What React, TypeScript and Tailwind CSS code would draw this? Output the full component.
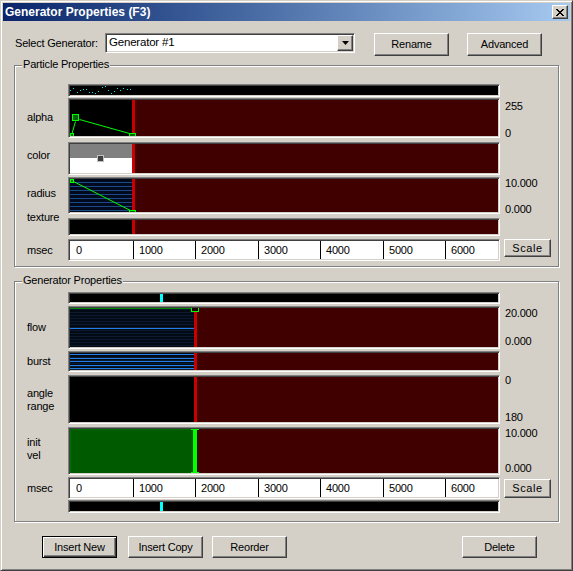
import React from "react";

const graphBox =
  "w-[432px] border border-t-[#808080] border-l-[#808080] border-b-white border-r-white p-px shadow-[inset_1px_1px_0_#404040,inset_-1px_-1px_0_#d4d0c8]";

const raised =
  "border border-t-white border-l-white border-b-[#404040] border-r-[#404040] shadow-[inset_-1px_-1px_0_#808080] bg-[#d4d0c8]";

function Graph({ cls, h, children }: { cls: string; h: number; children?: React.ReactNode }) {
  return (
    <div className={`${graphBox} ${cls}`}>
      <svg width={428} height={h} className="block" shapeRendering="crispEdges">
        {children}
      </svg>
    </div>
  );
}

function Split({ h, at, bg = "#000000" }: { h: number; at: number; bg?: string }) {
  return (
    <>
      <rect x={0} y={0} width={at} height={h} fill={bg} />
      <rect x={at} y={0} width={3} height={h} fill="#c80000" />
      <rect x={at + 3} y={0} width={428 - at - 3} height={h} fill="#400000" />
    </>
  );
}

function Ruler() {
  return (
    <div className={`${graphBox} h-[22px] bg-white`}>
      <div className="flex h-full bg-white leading-[13px]">
        <div className="w-[63px] pl-[6px] flex items-center">0</div>
        <div className="w-[62px] pl-[5px] flex items-center border-l border-black">1000</div>
        <div className="w-[63px] pl-[5px] flex items-center border-l border-black">2000</div>
        <div className="w-[62px] pl-[5px] flex items-center border-l border-black">3000</div>
        <div className="w-[63px] pl-[5px] flex items-center border-l border-black">4000</div>
        <div className="w-[62px] pl-[5px] flex items-center border-l border-black">5000</div>
        <div className="flex-1 pl-[5px] flex items-center border-l border-black">6000</div>
      </div>
    </div>
  );
}

function Btn({ children, cls, def }: { children: React.ReactNode; cls: string; def?: boolean }) {
  if (def) {
    return (
      <div
        className={`w-[75px] h-[22px] flex items-center justify-center border border-black bg-[#d4d0c8] shadow-[inset_1px_1px_0_#fff,inset_-1px_-1px_0_#404040,inset_-2px_-2px_0_#808080] ${cls}`}
      >
        {children}
      </div>
    );
  }
  return <div className={`flex items-center justify-center ${raised} ${cls}`}>{children}</div>;
}

const dots: [number, number][] = [
  [0, 4], [3, 2], [7, 6], [10, 4], [13, 3], [16, 3], [19, 6], [22, 6], [25, 7], [28, 5],
  [32, 1], [35, 0], [38, 4], [41, 7], [44, 5], [47, 2], [50, 4], [53, 2], [57, 3], [60, 3],
];

function Faint({ h, w }: { h: number; w: number }) {
  const lines: number[] = [];
  for (let y = 1; y < h; y += 3) lines.push(y);
  return (
    <>
      <rect x={0} y={0} width={w} height={h} fill="#020a16" />
      {lines.map((y) => (
        <rect key={y} x={0} y={y} width={w} height={1} fill="#0b1a2e" />
      ))}
    </>
  );
}

export default function App() {
  return (
    <div className="w-[573px] h-[571px] bg-[#d4d0c8] border border-t-[#d4d0c8] border-l-[#d4d0c8] border-r-[#404040] border-b-[#404040] p-[2px] shadow-[inset_1px_1px_0_#fff,inset_-1px_-1px_0_#808080] font-['Liberation_Sans',Arial,sans-serif] text-[11px] tracking-[-0.2px] text-black flex flex-col overflow-hidden">
      {/* Title bar */}
      <div className="h-[18px] flex items-center justify-between bg-linear-to-r from-[#0a246a] to-[#a6caf0] pl-[2px] pr-[2px]">
        <span className="text-white font-bold text-[12px] tracking-normal leading-[18px]">Generator Properties (F3)</span>
        <div className={`w-[16px] h-[14px] flex items-center justify-center ${raised}`}>
          <svg width={8} height={7} viewBox="0 0 8 7" shapeRendering="crispEdges">
            <path d="M0 0h2v1h-2zM6 0h2v1h-2zM1 1h2v1h-2zM5 1h2v1h-2zM2 2h4v1h-4zM3 3h2v1h-2zM2 4h4v1h-4zM1 5h2v1h-2zM5 5h2v1h-2zM0 6h2v1h-2zM6 6h2v1h-2z" fill="#000" />
          </svg>
        </div>
      </div>

      {/* Top row */}
      <div className="flex items-start mt-[12px] ml-[12px]">
        <div className="w-[90px] h-[20px] flex items-center">Select Generator:</div>
        <div className="w-[250px] h-[20px] bg-white border border-t-[#808080] border-l-[#808080] border-b-white border-r-white shadow-[inset_1px_1px_0_#404040,inset_-1px_-1px_0_#d4d0c8] p-px flex items-center">
          <div className="flex-1 pl-[2px] text-[11.5px]">Generator #1</div>
          <div className={`w-[16px] h-[16px] flex items-center justify-center ${raised}`}>
            <svg width={7} height={4} viewBox="0 0 7 4">
              <polygon points="0,0 7,0 3.5,4" fill="#000" />
            </svg>
          </div>
        </div>
        <Btn cls="ml-[19px] w-[75px] h-[23px]">Rename</Btn>
        <Btn cls="ml-[18px] w-[75px] h-[23px]">Advanced</Btn>
      </div>

      {/* Particle Properties */}
      <div className="relative mt-[9px] ml-[11px] w-[545px] h-[202px] border border-[#808080] shadow-[inset_1px_1px_0_#fff,1px_1px_0_#fff] pt-[18px] pl-[12px] leading-[13px]">
        <span className="absolute left-[7px] top-[-8px] px-[1px] bg-[#d4d0c8]">Particle Properties</span>

        <div className="flex">
          <div className="w-[41px]" />
          <Graph cls="h-[13px]" h={9}>
            <rect x={0} y={0} width={428} height={9} fill="#000" />
            {dots.map(([x, y], i) => (
              <rect key={i} x={x} y={y} width={1} height={1} fill="#00e8e8" />
            ))}
          </Graph>
        </div>

        <div className="flex mt-[1px]">
          <div className="w-[41px] mt-[13px]">alpha</div>
          <Graph cls="h-[40px]" h={36}>
            <Split h={36} at={62} />
            <line x1={9.5} y1={19.5} x2={59.5} y2={33.5} stroke="#00ff00" shapeRendering="auto" />
            <line x1={5.5} y1={21.5} x2={2} y2={33.5} stroke="#00ff00" shapeRendering="auto" />
            <rect x={2.5} y={14.5} width={6} height={6} fill="#006400" stroke="#00ff00" />
            <rect x={0.5} y={33.5} width={3} height={4} fill="#006400" stroke="#00ff00" />
            <rect x={59.5} y={33.5} width={6} height={5} fill="#006400" stroke="#00ff00" />
          </Graph>
          <div className="pl-[5px] flex flex-col">
            <div className="mt-[2px]">255</div>
            <div className="mt-[14px]">0</div>
          </div>
        </div>

        <div className="flex mt-[2px]">
          <div className="w-[41px] mt-[7px]">color</div>
          <Graph cls="h-[33px]" h={29}>
            <Split h={29} at={62} />
            <rect x={0} y={0} width={62} height={14} fill="#808080" />
            <rect x={0} y={14} width={62} height={15} fill="#ffffff" />
            <rect x={27.5} y={11.5} width={6} height={6} fill="#404040" stroke="#c0c0c0" />
          </Graph>
        </div>

        <div className="flex mt-[2px]">
          <div className="w-[41px] mt-[10px]">radius</div>
          <Graph cls="h-[37px]" h={33}>
            <Split h={33} at={62} bg="#000a1c" />
            {[3, 7, 11, 15, 19, 23, 27, 31].map((y) => (
              <rect key={y} x={0} y={y} width={62} height={1} fill="#1b4a88" />
            ))}
            <line x1={1.5} y1={1.5} x2={61.5} y2={32} stroke="#00ff00" shapeRendering="auto" />
            <rect x={0.5} y={0.5} width={3} height={3} fill="#006400" stroke="#00ff00" />
            <rect x={59.5} y={31.5} width={6} height={5} fill="#006400" stroke="#00ff00" />
          </Graph>
          <div className="pl-[5px] flex flex-col">
            <div>10.000</div>
            <div className="mt-[13px]">0.000</div>
          </div>
        </div>

        <div className="flex mt-[2px]">
          <div className="w-[41px] mt-[-7px]">texture</div>
          <Graph cls="h-[18px]" h={14}>
            <Split h={14} at={62} />
          </Graph>
        </div>

        <div className="flex mt-[3px]">
          <div className="w-[41px] flex items-center">msec</div>
          <Ruler />
          <div className="pl-[4px]">
            <Btn cls="w-[47px] h-[18px] tracking-[0.6px]">Scale</Btn>
          </div>
        </div>
      </div>

      {/* Generator Properties */}
      <div className="relative mt-[14px] ml-[11px] w-[545px] h-[241px] border border-[#808080] shadow-[inset_1px_1px_0_#fff,1px_1px_0_#fff] pt-[10px] pl-[12px] leading-[13px]">
        <span className="absolute left-[7px] top-[-8px] px-[1px] bg-[#d4d0c8]">Generator Properties</span>

        <div className="flex">
          <div className="w-[41px]" />
          <Graph cls="h-[12px]" h={8}>
            <rect x={0} y={0} width={428} height={8} fill="#000" />
            <rect x={90} y={0} width={3} height={8} fill="#00ffff" />
          </Graph>
        </div>

        <div className="flex mt-[2px]">
          <div className="w-[41px] flex items-center">flow</div>
          <Graph cls="h-[43px]" h={39}>
            <Split h={39} at={124} />
            <Faint h={39} w={124} />
            <rect x={0} y={0} width={124} height={1} fill="#008a00" />
            <rect x={0} y={20} width={124} height={1} fill="#1f7fe6" />
            <rect x={121} y={0} width={8} height={4} fill="#200000" />
            <path d="M121.5 0 V3.5 H128.5 V0" stroke="#00ff00" fill="none" />
          </Graph>
          <div className="pl-[5px] flex flex-col">
            <div className="mt-[1px]">20.000</div>
            <div className="mt-[15px]">0.000</div>
          </div>
        </div>

        <div className="flex mt-[2px]">
          <div className="w-[41px] flex items-center">burst</div>
          <Graph cls="h-[21px]" h={17}>
            <Split h={17} at={124} />
            <Faint h={17} w={124} />
            {[1, 5, 8, 12, 15].map((y) => (
              <rect key={y} x={0} y={y} width={124} height={1} fill="#1f7fe6" />
            ))}
          </Graph>
        </div>

        <div className="flex mt-[3px]">
          <div className="w-[41px] flex flex-col justify-center">
            <div>angle</div>
            <div>range</div>
          </div>
          <Graph cls="h-[49px]" h={45}>
            <Split h={45} at={124} />
          </Graph>
          <div className="pl-[5px] flex flex-col">
            <div className="mt-[-1px]">0</div>
            <div className="mt-[24px]">180</div>
          </div>
        </div>

        <div className="flex mt-[3px]">
          <div className="w-[41px] mt-[9px]">
            <div>init</div>
            <div>vel</div>
          </div>
          <Graph cls="h-[48px]" h={44}>
            <Split h={44} at={124} bg="#005a00" />
            <rect x={0} y={0} width={123} height={1} fill="#006e00" />
            <rect x={0} y={0} width={1} height={44} fill="#006e00" />
            <rect x={123} y={0} width={4} height={44} fill="#00ff00" />
            <rect x={121} y={0} width={8} height={1} fill="#00ff00" />
            <rect x={121} y={43} width={8} height={1} fill="#00ff00" />
          </Graph>
          <div className="pl-[5px] flex flex-col">
            <div>10.000</div>
            <div className="mt-[22px]">0.000</div>
          </div>
        </div>

        <div className="flex mt-[2px]">
          <div className="w-[41px] flex items-center">msec</div>
          <Ruler />
          <div className="pl-[4px] pt-[2px]">
            <Btn cls="w-[47px] h-[19px] tracking-[0.6px]">Scale</Btn>
          </div>
        </div>

        <div className="flex mt-[1px]">
          <div className="w-[41px]" />
          <Graph cls="h-[13px]" h={9}>
            <rect x={0} y={0} width={428} height={9} fill="#000" />
            <rect x={90} y={0} width={3} height={9} fill="#00ffff" />
          </Graph>
        </div>
      </div>

      {/* Bottom buttons */}
      <div className="flex mt-[14px] ml-[39px]">
        <Btn def cls="">Insert New</Btn>
        <Btn cls="ml-[11px] w-[75px] h-[22px]">Insert Copy</Btn>
        <Btn cls="ml-[9px] w-[75px] h-[22px]">Reorder</Btn>
        <Btn cls="ml-[175px] w-[75px] h-[22px]">Delete</Btn>
      </div>
    </div>
  );
}
